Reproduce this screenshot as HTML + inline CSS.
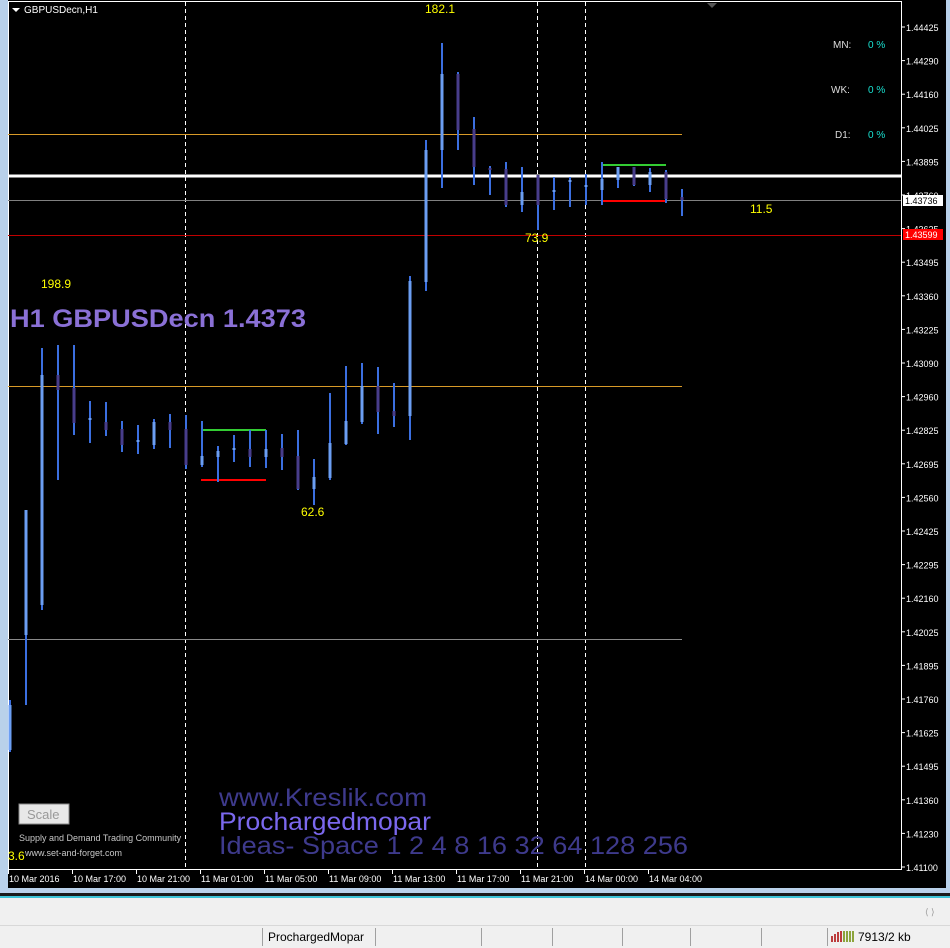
<!DOCTYPE html>
<html><head><meta charset="utf-8"><style>
html,body{margin:0;padding:0;width:950px;height:948px;overflow:hidden;background:#f0f0f0;font-family:"Liberation Sans",sans-serif}
svg{display:block}
</style></head><body>
<svg width="950" height="948" xmlns="http://www.w3.org/2000/svg" font-family="Liberation Sans, sans-serif">
<rect x="0" y="0" width="950" height="895" fill="#b9d1ea"/>
<rect x="8" y="0" width="938" height="888" fill="#000"/>
<rect x="0" y="893" width="950" height="3" fill="#1a1a1a"/>
<rect x="0" y="896" width="950" height="2" fill="#3cc3d6"/>
<rect x="0" y="898" width="950" height="50" fill="#f0f0f0"/>
<line x1="0" y1="925.5" x2="950" y2="925.5" stroke="#d8d8d8"/>
<g stroke="#a0a0a0"><line x1="262.5" y1="928" x2="262.5" y2="946"/><line x1="375.5" y1="928" x2="375.5" y2="946"/><line x1="481.5" y1="928" x2="481.5" y2="946"/><line x1="552.5" y1="928" x2="552.5" y2="946"/><line x1="622.5" y1="928" x2="622.5" y2="946"/><line x1="690.5" y1="928" x2="690.5" y2="946"/><line x1="761.5" y1="928" x2="761.5" y2="946"/><line x1="827.5" y1="928" x2="827.5" y2="946"/></g>
<text x="268" y="941" font-size="12" fill="#000">ProchargedMopar</text>
<g stroke-width="1.5"><line x1="832" y1="942" x2="832" y2="936" stroke="#a00"/><line x1="835" y1="942" x2="835" y2="934" stroke="#a00"/><line x1="838" y1="942" x2="838" y2="932" stroke="#a00"/><line x1="841" y1="942" x2="841" y2="931" stroke="#a00"/><line x1="844" y1="942" x2="844" y2="931" stroke="#6a8a00"/><line x1="847" y1="942" x2="847" y2="931" stroke="#6a8a00"/><line x1="850" y1="942" x2="850" y2="931" stroke="#6a8a00"/><line x1="853" y1="942" x2="853" y2="931" stroke="#6a8a00"/></g>
<text x="858" y="941" font-size="12" fill="#000">7913/2 kb</text>
<text x="925" y="915" font-size="9" fill="#999">⟨  ⟩</text>
<line x1="8" y1="1.5" x2="902" y2="1.5" stroke="#fff"/>
<line x1="8.5" y1="1" x2="8.5" y2="870" stroke="#fff"/>
<line x1="901.5" y1="1" x2="901.5" y2="870" stroke="#fff"/>
<line x1="8" y1="869.5" x2="902" y2="869.5" stroke="#fff"/>
<polygon points="707,3 717,3 712,8" fill="#555"/>
<polygon points="12,8 20,8 16,12" fill="#fff"/>
<text x="24" y="13" font-size="10" fill="#fff">GBPUSDecn,H1</text>
<g stroke="#fff" stroke-dasharray="4,3"><line x1="185.5" y1="2" x2="185.5" y2="869"/><line x1="537.5" y1="2" x2="537.5" y2="869"/><line x1="585.5" y1="2" x2="585.5" y2="869"/></g>
<line x1="8" y1="134.5" x2="682" y2="134.5" stroke="#d89a28"/>
<line x1="8" y1="386.5" x2="682" y2="386.5" stroke="#d89a28"/>
<line x1="8" y1="639.5" x2="682" y2="639.5" stroke="#8a8a8a"/>
<line x1="8" y1="176" x2="901" y2="176" stroke="#fff" stroke-width="3"/>
<line x1="8" y1="200.5" x2="901" y2="200.5" stroke="#808080"/>
<line x1="8" y1="235.5" x2="901" y2="235.5" stroke="#c00000"/>
<g stroke-width="2"><line x1="201" y1="430" x2="266" y2="430" stroke="#3c3"/><line x1="201" y1="480" x2="266" y2="480" stroke="#f00"/><line x1="601" y1="165" x2="666" y2="165" stroke="#3c3"/><line x1="601" y1="201" x2="666" y2="201" stroke="#f00"/></g>
<g id="c"></g>
<g font-size="12" fill="#ffff00"><text x="425" y="13">182.1</text><text x="41" y="288">198.9</text><text x="301" y="516">62.6</text><text x="525" y="242">73.9</text><text x="750" y="213">11.5</text><text x="8" y="860">3.6</text></g>
<text x="10" y="327" font-size="25" font-weight="bold" fill="#8a70d6" textLength="296" lengthAdjust="spacingAndGlyphs">H1 GBPUSDecn 1.4373</text>
<text x="219" y="806" font-size="25" fill="#3e3a8c" textLength="208" lengthAdjust="spacingAndGlyphs">www.Kreslik.com</text>
<text x="219" y="830" font-size="25" fill="#7b68ee" textLength="212" lengthAdjust="spacingAndGlyphs">Prochargedmopar</text>
<text x="219" y="854" font-size="25" fill="#3e3a8c" textLength="469" lengthAdjust="spacingAndGlyphs">Ideas- Space 1 2 4 8 16 32 64 128 256</text>
<rect x="19" y="804" width="50" height="20" fill="#e8e8e8" stroke="#888"/>
<text x="27" y="819" font-size="13" fill="#999">Scale</text>
<text x="19" y="841" font-size="9" fill="#c8c8c8">Supply and Demand Trading Community</text>
<text x="25" y="856" font-size="9" fill="#c8c8c8">www.set-and-forget.com</text>
<g font-size="10"><text x="833" y="48" fill="#ddd">MN:</text><text x="868" y="48" fill="#19e0d0">0 %</text><text x="831" y="93" fill="#ddd">WK:</text><text x="868" y="93" fill="#19e0d0">0 %</text><text x="835" y="138" fill="#ddd">D1:</text><text x="868" y="138" fill="#19e0d0">0 %</text></g>
<g font-size="9" fill="#fff" id="ps"></g>
<rect x="903" y="195" width="40" height="11" fill="#fff"/>
<text x="905" y="204" font-size="9" fill="#000">1.43736</text>
<rect x="903" y="229" width="40" height="11" fill="#f00"/>
<text x="905" y="238" font-size="9" fill="#fff">1.43599</text>
<g font-size="9" fill="#fff" id="ta"></g>
</svg>
<script>
var ns="http://www.w3.org/2000/svg";
function el(p,t,a,txt){var e=document.createElementNS(ns,t);for(var k in a)e.setAttribute(k,a[k]);if(txt)e.textContent=txt;p.appendChild(e);return e;}
var C=[[9,700,752,705,750,1],[25,510,705,510,635,1],[41,348,610,375,605,1],[57,345,480,375,390,0],[73,345,435,388,423,0],[89,401,443,418,420,1],[105,402,436,422,430,0],[121,421,452,429,445,0],[137,425,454,440,442,1],[153,419,449,422,445,1],[169,414,448,422,430,0],[185,415,469,429,465,0],[201,421,467,456,465,1],[217,446,482,451,457,1],[233,435,462,448,450,1],[249,430,467,449,457,0],[265,430,468,449,457,1],[281,434,470,448,457,0],[297,430,490,456,489,0],[313,459,505,477,489,1],[329,393,480,443,478,1],[345,366,445,421,444,1],[361,363,424,386,422,1],[377,367,434,386,412,0],[393,383,427,411,416,0],[409,276,440,281,416,1],[425,140,291,150,282,1],[441,43,188,74,150,1],[457,72,150,74,130,0],[473,117,185,129,167,0],[489,166,195,168,170,0],[505,162,207,169,205,0],[521,167,212,192,205,1],[537,175,230,175,205,0],[553,177,210,190,192,1],[569,177,207,180,182,1],[585,174,205,185,187,1],[601,162,205,179,190,1],[617,167,188,167,180,1],[633,167,186,167,185,0],[649,168,192,172,185,1],[665,170,203,172,199,0],[681,189,216,197,200,0]];
var g=document.getElementById('c');
C.forEach(function(c){el(g,'rect',{x:c[0],y:c[1],width:2,height:c[2]-c[1],fill:'#3b6fe0'});el(g,'rect',{x:c[0]-0.5,y:c[3],width:3,height:Math.max(2,c[4]-c[3]),fill:c[5]?'#6b9ef2':'#483d8b'});});
var ps=document.getElementById('ps');
var P=["1.44425","1.44290","1.44160","1.44025","1.43895","1.43760","1.43625","1.43495","1.43360","1.43225","1.43090","1.42960","1.42825","1.42695","1.42560","1.42425","1.42295","1.42160","1.42025","1.41895","1.41760","1.41625","1.41495","1.41360","1.41230","1.41100"];
P.forEach(function(p,i){var y=27+i*33.6;el(ps,'line',{x1:902,y1:y,x2:905,y2:y,stroke:'#fff'});el(ps,'text',{x:906,y:y+4},p);});
var ta=document.getElementById('ta');
var T=["10 Mar 2016","10 Mar 17:00","10 Mar 21:00","11 Mar 01:00","11 Mar 05:00","11 Mar 09:00","11 Mar 13:00","11 Mar 17:00","11 Mar 21:00","14 Mar 00:00","14 Mar 04:00"];
T.forEach(function(t,i){var x=8+i*64;el(ta,'line',{x1:x+.5,y1:870,x2:x+.5,y2:874,stroke:'#fff'});el(ta,'text',{x:x+1,y:882},t);});
</script>
</body></html>
